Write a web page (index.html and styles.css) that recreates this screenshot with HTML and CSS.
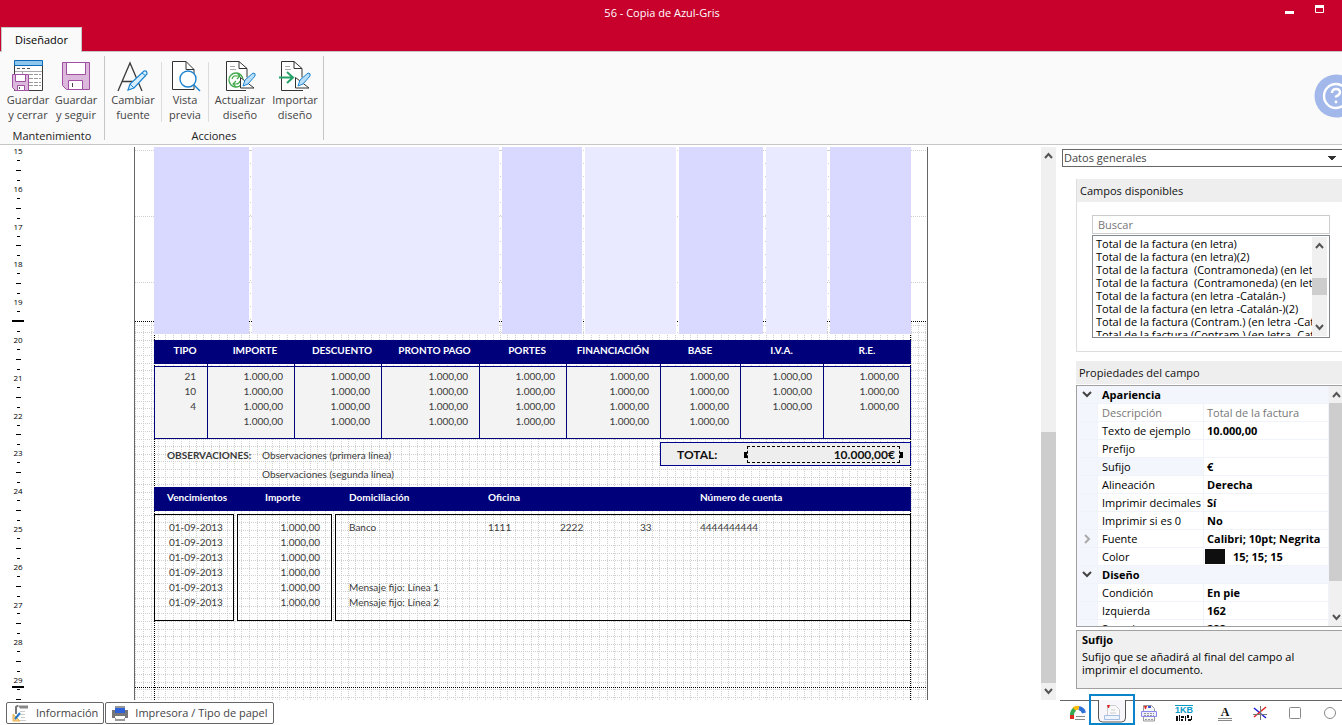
FILE: index.html
```html
<!DOCTYPE html>
<html lang="es">
<head>
<meta charset="utf-8">
<title>56 - Copia de Azul-Gris</title>
<link rel="stylesheet" href="styles.css">
</head>
<body>
<div class="app">
  <header class="titlebar">
    <h1 class="title">56 - Copia de Azul-Gris</h1>
    <div class="window-buttons">
      <button class="win" aria-label="Minimizar"><svg width="10" height="12"><rect y="9" width="9" height="3" fill="#fff"/></svg></button>
      <button class="win" aria-label="Maximizar"><svg width="10" height="12"><path d="M.5 5.500h8v5h-8z" fill="none" stroke="#fff"/><rect y="3" width="9" height="3" fill="#fff"/></svg></button>
    </div>
    <button class="ribbon-tab">Diseñador</button>
  </header>

  <div class="ribbon">
    <section class="group">
      <div class="group-buttons">
        <button class="tool">
          <svg width="32" height="32" fill="none"><path d="M2.500 5V30.500H30.500V1" fill="#fff" stroke="#3b3b3b"/><path d="M2.500.500h28v5h-28z" fill="#8fc6ee" stroke="#0a6ab8"/><path d="M5 8.500h3m2 0h3m2 0h3" stroke="#555"/><path d="M3 11.500h27M10.500 12v5" stroke="#aaa"/><path d="M17 14.500h12M17 18.500h12M17 22.500h12M17 25.500h12" stroke="#999" stroke-dasharray="4 1"/><path d="M.5 14.500h16v16H3.500L.5 27.500z" fill="#dcb8dd" stroke="#a04fa3"/><path d="M3.500 14.500h10v7h-10zM5.500 25.500h7v5h-7z" fill="#fff" stroke="#a04fa3"/><path d="M7.500 27v2" stroke="#555"/></svg>
          <span>Guardar<br>y cerrar</span>
        </button>
        <button class="tool">
          <svg width="32" height="32" fill="none"><path d="M2.500 2.500h27v27H6.500L2.500 25.500z" fill="#dcb8dd" stroke="#a04fa3"/><path d="M6.500 2.500h19v12h-19z" fill="#fff" stroke="#a04fa3"/><path d="M8.500 20.500h14v9h-14z" fill="#fff" stroke="#a04fa3"/><path d="M12.500 23v4" stroke="#444"/></svg>
          <span>Guardar<br>y seguir</span>
        </button>
      </div>
      <h2 class="group-name">Mantenimiento</h2>
    </section>
    <section class="group">
      <div class="group-buttons">
        <button class="tool tool-wide">
          <svg width="32" height="32" fill="none"><path d="M1 31 13 3l12 28M5 21.500h16" stroke="#3b3b3b" stroke-width="1.300"/><path d="m11 30 2-6L27 11q3-1 3 3L17 28z" fill="#d9efff" stroke="#1c84d0" stroke-width="1.200"/><path d="m13 24 4 4M25 13l4 3" stroke="#1c84d0"/></svg>
          <span>Cambiar<br>fuente</span>
        </button>
        <i class="divider"></i>
        <button class="tool tool-narrow">
          <svg width="32" height="32" fill="none"><path d="M3.500 1.500H17l8 8V29.500H3.500z" fill="#fff" stroke="#333"/><path d="M17 1.500v8h8" stroke="#333"/><circle cx="19" cy="19" r="8" fill="#fff" stroke="#1c84d0" stroke-width="1.400"/><path d="m25 25 6 6" stroke="#1c84d0" stroke-width="1.400"/></svg>
          <span>Vista<br>previa</span>
        </button>
        <i class="divider"></i>
        <button class="tool tool-wider">
          <svg width="32" height="32" fill="none"><path d="M22 30.500H2.500v-29H15l8 7v9" fill="#fff" stroke="#333"/><path d="M15 1.500v7h8" stroke="#333"/><path d="M6 6.500h5M6 9.500h6" stroke="#aaa"/><circle cx="12" cy="20" r="7" stroke="#41a94a" stroke-width="1.300"/><path d="M8 19q1-4 5-3h3m-3-3 3 3-3 3M16 21q-1 3-4 3H9m3-3-3 3 3 3" stroke="#41a94a" stroke-width="1.200"/><path d="M16.500 17.500V28H30z" fill="#fff" stroke="#333"/><path d="m19 26 2-6 8-7q3 0 2 3l-7 8z" fill="#b8defa" stroke="#1c84d0"/></svg>
          <span>Actualizar<br>diseño</span>
        </button>
        <button class="tool">
          <svg width="32" height="32" fill="none"><path d="M24 30.500H2.500v-29H15l8 7v9" fill="#fff" stroke="#333"/><path d="M15 1.500v7h8" stroke="#333"/><path d="M6 6.500h5M6 9.500h6" stroke="#aaa"/><path d="M0 17.500h13M8 12l6 5.500L8 23" stroke="#26a269" stroke-width="2"/><path d="M16.500 17.500V28H30z" fill="#fff" stroke="#333"/><path d="m19 26 2-6 8-7q3 0 2 3l-7 8z" fill="#b8defa" stroke="#1c84d0"/></svg>
          <span>Importar<br>diseño</span>
        </button>
      </div>
      <h2 class="group-name">Acciones</h2>
    </section>
    <button class="help" aria-label="Ayuda"><svg width="44" height="44" fill="none"><circle cx="22" cy="22" r="21.500" fill="#a3b8ea"/><circle cx="22" cy="22" r="12" stroke="#fff" stroke-width="2.400"/><path d="M18 19q0-4 4-4t4 3.500q0 2-4 4v1" stroke="#fff" stroke-width="2.400"/><circle cx="22" cy="28" r="1.400" fill="#fff"/></svg></button>
  </div>

  <main class="main">
    <div class="left">
      <div class="workspace">
        <ol class="ruler">
          <li>15<i></i><i></i><i></i></li><li>16<i></i><i></i><i></i></li><li>17<i></i><i></i><i></i></li><li>18<i></i><i></i><i></i></li><li>19<i></i><i></i><i></i></li><li>20<i></i><i></i><i></i></li><li>21<i></i><i></i><i></i></li><li>22<i></i><i></i><i></i></li><li>23<i></i><i></i><i></i></li><li>24<i></i><i></i><i></i></li><li>25<i></i><i></i><i></i></li><li>26<i></i><i></i><i></i></li><li>27<i></i><i></i><i></i></li><li>28<i></i><i></i><i></i></li><li>29<i></i><i></i><i></i></li>
        </ol>
        <b class="ruler-mark mark-top"></b><b class="ruler-mark mark-bottom"></b>

        <div class="canvas">
          <article class="sheet">
            <svg class="grid-lines" width="100%" height="100%" fill="none" shape-rendering="crispEdges">
              <defs>
                <pattern id="fine" x="0" y="178" width="38" height="38" patternUnits="userSpaceOnUse">
                  <path d="M0 .5h38M0 7.500h38M0 15.500h38M0 22.500h38M0 30.500h38" stroke="#d0d0d0" stroke-dasharray="1 1"/>
                  <path d="M.5 0v38M8.500 0v38M16.500 0v38M23.500 0v38M30.500 0v38" stroke="#d0d0d0" stroke-dasharray="1 1"/>
                </pattern>
              </defs>
              <rect y="175" width="100%" height="100%" fill="url(#fine)"/>
              <path d="M0 3.500h793M0 69.500h793M0 135.500h793" stroke="#d0d0d0" stroke-dasharray="1 1"/>
              <path d="M115.500 3v172M365.500 3v172M448.500 3v172M630.500 3v172M693.500 3v172" stroke="#d0d0d0" stroke-dasharray="1 12"/>
              <path d="M0 174.500h793M0 540.500h793" stroke="#000" stroke-dasharray="1 1"/>
              <path d="M19.500 0v600M775.500 0v600" stroke="#000" stroke-dasharray="1 1"/>
            </svg>

            <div class="bands"><i></i><i></i><i></i><i></i><i></i><i></i><i></i></div>

            <table class="taxes">
              <colgroup><col class="w53"><col class="w87"><col class="w87"><col class="w98"><col class="w87"><col class="w94"><col class="w80"><col class="w83"><col></colgroup>
              <thead>
                <tr><th>TIPO</th><th>IMPORTE</th><th>DESCUENTO</th><th>PRONTO PAGO</th><th>PORTES</th><th>FINANCIACIÓN</th><th>BASE</th><th>I.V.A.</th><th>R.E.</th></tr>
              </thead>
              <tbody>
                <tr class="joint"><td></td><td></td><td></td><td></td><td></td><td></td><td></td><td></td><td></td></tr>
                <tr><td>21</td><td>1.000,00</td><td>1.000,00</td><td>1.000,00</td><td>1.000,00</td><td>1.000,00</td><td>1.000,00</td><td>1.000,00</td><td>1.000,00</td></tr>
                <tr><td>10</td><td>1.000,00</td><td>1.000,00</td><td>1.000,00</td><td>1.000,00</td><td>1.000,00</td><td>1.000,00</td><td>1.000,00</td><td>1.000,00</td></tr>
                <tr><td>4</td><td>1.000,00</td><td>1.000,00</td><td>1.000,00</td><td>1.000,00</td><td>1.000,00</td><td>1.000,00</td><td>1.000,00</td><td>1.000,00</td></tr>
                <tr><td></td><td>1.000,00</td><td>1.000,00</td><td>1.000,00</td><td>1.000,00</td><td>1.000,00</td><td>1.000,00</td><td></td><td></td></tr>
              </tbody>
            </table>

            <div class="summary">
              <strong class="notes-name">OBSERVACIONES:</strong>
              <div class="notes"><p>Observaciones (primera línea)</p><p>Observaciones (segunda línea)</p></div>
              <div class="total">
                <strong>TOTAL:</strong>
                <strong class="selected">10.000,00€<i class="handle handle-left"></i><i class="handle handle-right"></i></strong>
              </div>
            </div>

            <div class="due-head"><b>Vencimientos</b><b>Importe</b><b>Domiciliación</b><b>Oficina</b><b>Número de cuenta</b></div>
            <div class="due-body">
              <div class="box dates">01-09-2013<br>01-09-2013<br>01-09-2013<br>01-09-2013<br>01-09-2013<br>01-09-2013</div>
              <div class="box amounts">1.000,00<br>1.000,00<br>1.000,00<br>1.000,00<br>1.000,00<br>1.000,00</div>
              <div class="box bank">
                <div class="account"><span>Banco</span><span>1111</span><span>2222</span><span>33</span><span>4444444444</span></div>
                <p>Mensaje fijo: Línea 1<br>Mensaje fijo: Línea 2</p>
              </div>
            </div>
          </article>
        </div>

        <div class="scroll">
          <svg width="15" height="17" class="arrow"><path d="m4 11 3.500-4 3.500 4"/></svg>
          <i class="space"></i><i class="thumb"></i>
          <svg width="15" height="17" class="arrow"><path d="m4 6 3.500 4L11 6"/></svg>
        </div>
      </div>

      <footer class="footer">
        <button class="foot-button"><svg width="18" height="18" fill="none"><path d="M6 1.500h10v3H8z" fill="#888"/><path d="M6 1.500 4 3v7" stroke="#777" stroke-width="2"/><path d="M8 7.500h5M8 10.500h5M9 13.500h4M8 16.500h6" stroke="#ccc"/><path d="M1 10v7h7z" fill="#f7d08a" stroke="#eab04f"/><path d="m3 15 5-6" stroke="#2479c9" stroke-width="2"/></svg>Información</button>
        <button class="foot-button"><svg width="18" height="18"><path d="M4 2h10v4H4zM4 14h10v3H4z" fill="#999"/><path d="M1 6h16v8h-3v-2H4v2H1z" fill="#777"/><path d="M4 4h10v5H4z" fill="#2d62d8"/><path d="M5 12h8v3H5z" fill="#fff"/></svg>Impresora / Tipo de papel</button>
      </footer>
    </div>

    <aside class="side">
      <select class="source" aria-label="Categoría"><option>Datos generales</option></select>

      <section class="panel">
        <h2 class="panel-name">Campos disponibles</h2>
        <div class="panel-body">
          <input class="search" type="text" placeholder="Buscar" aria-label="Buscar">
          <div class="fields">
            <ul class="field-list">
              <li>Total de la factura (en letra)</li><li>Total de la factura (en letra)(2)</li><li>Total de la factura&nbsp; (Contramoneda) (en letra)</li><li>Total de la factura&nbsp; (Contramoneda) (en letra)(2)</li><li>Total de la factura (en letra -Catalán-)</li><li>Total de la factura (en letra -Catalán-)(2)</li><li>Total de la factura (Contram.) (en letra -Catalán-)</li><li>Total de la factura (Contram.) (en letra -Catalán-)(2)</li>
            </ul>
            <div class="list-scroll">
              <svg width="15" height="17" class="arrow"><path d="m4 11 3.500-4 3.500 4"/></svg>
              <i class="list-space"></i><i class="list-thumb"></i><i class="list-rest"></i>
              <svg width="15" height="17" class="arrow"><path d="m4 6 3.500 4L11 6"/></svg>
            </div>
          </div>
        </div>
      </section>

      <section class="properties">
        <h2 class="panel-name">Propiedades del campo</h2>
        <div class="property-box">
          <div class="property-view">
          <table class="property-table">
            <colgroup><col class="w21"><col class="w106"><col></colgroup>
            <tbody>
              <tr class="category"><td><svg width="12" height="10" class="chevron"><path d="m2 2 4 4 4-4"/></svg></td><th colspan="2">Apariencia</th></tr>
              <tr class="muted"><td></td><th>Descripción</th><td>Total de la factura</td></tr>
              <tr><td></td><th>Texto de ejemplo</th><td>10.000,00</td></tr>
              <tr><td></td><th>Prefijo</th><td></td></tr>
              <tr class="current"><td></td><th>Sufijo</th><td>€</td></tr>
              <tr><td></td><th>Alineación</th><td>Derecha</td></tr>
              <tr><td></td><th>Imprimir decimales</th><td>Sí</td></tr>
              <tr><td></td><th>Imprimir si es 0</th><td>No</td></tr>
              <tr><td><svg width="12" height="10" class="chevron closed"><path d="m4 1 4 4-4 4"/></svg></td><th>Fuente</th><td>Calibri; 10pt; Negrita</td></tr>
              <tr><td></td><th>Color</th><td><span class="color"><i class="swatch"></i>15; 15; 15</span></td></tr>
              <tr class="category"><td><svg width="12" height="10" class="chevron"><path d="m2 2 4 4 4-4"/></svg></td><th colspan="2">Diseño</th></tr>
              <tr><td></td><th>Condición</th><td>En pie</td></tr>
              <tr><td></td><th>Izquierda</th><td>162</td></tr>
              <tr><td></td><th>Superior</th><td>282</td></tr>
            </tbody>
          </table>
          </div>
          <div class="property-scroll">
            <svg width="15" height="17" class="arrow"><path d="m4 11 3.500-4 3.500 4"/></svg>
            <i class="property-thumb"></i><i class="property-rest"></i>
            <svg width="15" height="17" class="arrow"><path d="m4 6 3.500 4L11 6"/></svg>
          </div>
        </div>
        <div class="hint"><strong>Sufijo</strong><p>Sufijo que se añadirá al final del campo al imprimir el documento.</p></div>
      </section>

      <nav class="tabs">
        <button class="tab" aria-label="Color"><svg width="18" height="18" fill="none"><path d="M3 15v-4" stroke="#e02b20" stroke-width="4"/><path d="M3 11q0-4 3-6" stroke="#34a853" stroke-width="4"/><path d="M5 5q2-2 5-1" stroke="#fbbc05" stroke-width="4"/><path d="M10 4q4 1 5 5" stroke="#2f6fd6" stroke-width="4"/><path d="M7 12.500h9M6 15.500h10" stroke="#888"/></svg></button>
        <button class="tab active" aria-label="Campos"><svg width="30" height="24" fill="none"><path d="M1.500 0v18q0 4 4 4h19q4 0 4-4V0" fill="#f7f7fb" stroke="#555"/><path d="M10.500 15V5.500h8l4 4V19" stroke="#ccc" fill="#fafafa"/><path d="M7.500 15.500h15v4h-15z" stroke="#a5bfe4" fill="#eef3fc"/><path d="M10 5h3l-1 3h-1z" fill="#e02020"/><path d="M13 13h6M14 10h4" stroke="#ccc"/></svg></button>
        <button class="tab" aria-label="Documento"><svg width="18" height="18" fill="none"><path d="M3.500 17V1.500h8l3 3V17z" stroke="#999" fill="#f6f6f6"/><path d="M4 2h3l-1 3H5z" fill="#e02020"/><path d="M8 2h3v2H8z" fill="#3c4fd0"/><path d="M1.500 7.500h15v5h-15z" stroke="#8c87ea" fill="#eeecff"/><path d="M4 9.500h10M4 11.500h10M5 15.500h8" stroke="#999" stroke-dasharray="2 1"/></svg></button>
        <button class="tab barcode" aria-label="Código de barras"><span>1KB</span><svg width="18" height="7"><path d="M1 1h2v5H1zM4 0h1v6H4zM6 1h3v2H6zM6 4h2v2H6zM10 1h1v5h-1zM12 0h2v3h-2zM13 4h3v2h-3zM16 1h1v4h-1z" fill="#111"/></svg></button>
        <button class="tab letter" aria-label="Texto"><span>A</span></button>
        <button class="tab" aria-label="Líneas"><svg width="18" height="18" fill="none"><path d="M3 4 15 14" stroke="#2020d8" stroke-width="1.500"/><path d="M15 3 3 13" stroke="#e02020" stroke-width="1.500"/><path d="M9.500 2v14M2 10.500h14" stroke="#777"/></svg></button>
        <button class="tab" aria-label="Rectángulo"><svg width="18" height="18" fill="none"><rect x="3.500" y="3.500" width="11" height="11" rx="1" stroke="#888"/></svg></button>
        <button class="tab" aria-label="Elipse"><svg width="18" height="18" fill="none"><circle cx="9" cy="9" r="5.500" stroke="#888"/></svg></button>
      </nav>
    </aside>
  </main>
</div>
</body>
</html>
```
FILE: styles.css
```css
* { box-sizing: border-box; }
body, h1, h2, p, ol, ul { margin: 0; padding: 0; }
body { font: 11px/14px "Open Sans", "Noto Sans", sans-serif; color: #111; }
ol, ul { list-style: none; }
button, input, select { font: inherit; color: inherit; border: 0; padding: 0; background: none; border-radius: 0; }
svg { display: block; flex: none; }

.app { height: 100vh; display: flex; flex-direction: column; overflow: hidden; background: #fff; }

/* Title bar */
.titlebar { flex: none; height: 52px; background: #c8002c; border-bottom: 1px solid #c6c6c6; display: grid; grid-template: 27px 25px / 82px 1fr 100px; }
.title { grid-column: 1 / 3; grid-row: 1; padding-left: 82px; text-align: center; color: #fff; font-size: 11px; font-weight: 400; line-height: 26px; }
.window-buttons { grid-column: 3; grid-row: 1; display: flex; gap: 20px; padding: 2px 0 0 43px; align-items: flex-start; }
.ribbon-tab { grid-column: 1; grid-row: 2; margin-left: 1px; background: #fafafa; border: 1px solid #c6c6c6; border-bottom: 0; color: #000; }

/* Ribbon */
.ribbon { flex: none; height: 93px; display: flex; background: #fafafa; border-bottom: 1px solid #c6c6c6; position: relative; }
.group { margin: 4px 0; padding: 0 4px; border-right: 1px solid #c6c6c6; display: flex; flex-direction: column; }
.group-buttons { display: flex; flex: 1; }
.group + .group .group-buttons { margin-left: -4px; }
.tool { flex: none; width: 48px; padding-top: 4px; display: flex; flex-direction: column; align-items: center; line-height: 15px; color: #444; white-space: nowrap; }
.tool-narrow { width: 46px; }
.tool-wide { width: 56px; }
.tool-wider { width: 62px; }
.divider { width: 1px; margin: 6px 0 10px; background: #dcdcdc; }
.group-name { text-align: center; font-size: 11px; font-weight: 400; line-height: 8px; color: #222; }
.help { position: absolute; right: -16px; top: 22px; }

/* Work area */
.main { flex: 1; min-height: 0; display: grid; grid-template-columns: 1fr 282px; }
.left { display: flex; flex-direction: column; min-width: 0; min-height: 0; }
.workspace { flex: 1; min-height: 0; padding-top: 2px; display: flex; overflow: hidden; position: relative; }
.ruler { width: 36px; height: 567px; display: flex; flex-direction: column; }
.ruler li { flex: 1; display: flex; flex-direction: column; align-items: center; justify-content: space-between; font: 8px/8px "Open Sans", sans-serif; color: #000; }
.ruler i { width: 3px; height: 1px; background: #000; margin: 4px 0; }
.ruler i:nth-child(2) { width: 5px; }
.ruler-mark { position: absolute; left: 12px; width: 12px; height: 2px; background: #000; }
.mark-top { top: 175px; }
.mark-bottom { top: 541px; }

.canvas { flex: 1; min-width: 0; overflow: hidden; padding-left: 98px; }
.sheet { width: 794px; height: 100%; padding: 0 16px 0 19px; border: solid #666; border-width: 0 1px; position: relative; overflow: hidden; font: 10px/15px Lato, sans-serif; color: #3a3a3a; }
.grid-lines { position: absolute; left: 0; top: 0; }
.bands, .taxes, .summary, .due-head, .due-body { position: relative; }
.bands { height: 187px; display: grid; gap: 3px; grid-template-columns: 95fr 247fr 80fr 91fr 84fr 61fr 81fr; }
.bands i { background: #d9d9ff; }
.bands i:nth-child(even) { background: #e9e9ff; }

.taxes { width: 100%; margin-top: 6px; table-layout: fixed; border-collapse: separate; border-spacing: 0; }
.taxes th { height: 24px; padding: 0 0 3px; background: #00007b; color: #fff; font-weight: 700; line-height: 15px; white-space: nowrap; }
.taxes th:nth-child(-n+5) { padding-left: 9px; }
.taxes td { height: 15px; padding: 0 11px 0 0; text-align: right; background: #f3f3f3; border-left: 1px solid #00007b; }
.taxes td:last-child { border-right: 1px solid #00007b; }
.taxes .joint td { height: 2px; background: none; }
.taxes .joint td:first-child { border-left-color: transparent; }
.taxes .joint td:last-child { border-right-color: transparent; }
.taxes .joint + tr td { height: 18px; padding-top: 2px; border-top: 1px solid #00007b; }
.taxes tr:last-child td { height: 25px; padding-bottom: 9px; border-bottom: 1px solid #00007b; }
.w53 { width: 53px; } .w87 { width: 87px; } .w98 { width: 98px; } .w94 { width: 94px; } .w80 { width: 80px; } .w83 { width: 83px; }

.summary { height: 48px; padding: 3px 0 0 13px; display: flex; }
.notes-name { width: 95px; padding-top: 6px; }
.notes { flex: 1; padding-top: 6px; display: flex; flex-direction: column; gap: 4px; }
.total { width: 251px; height: 24px; padding: 0 10px 0 16px; display: flex; align-items: center; background: #eee; border: 1px solid #000090; color: #111; font-size: 12px; }
.selected { flex: 1; margin-left: 30px; padding-right: 4px; border: 1px dashed #000; text-align: right; line-height: 15px; position: relative; }
.handle { position: absolute; top: 5px; width: 3px; height: 6px; background: #000; }
.handle-left { left: -4px; }
.handle-right { right: -4px; }

.due-head, .account { display: grid; }
.due-head { height: 24px; padding-left: 13px; background: #00007b; color: #fff; line-height: 21px; grid-template-columns: 98px 84px 139px 212px 1fr; }
.due-body { margin-top: 3px; display: grid; grid-template-columns: 80px 95px 1fr; gap: 3px; }
.box { border: 1px solid #000; padding: 5px 11px 10px; white-space: nowrap; }
.dates { padding-left: 14px; }
.amounts { text-align: right; }
.bank { padding-left: 13px; display: flex; flex-direction: column; justify-content: space-between; }
.account { grid-template-columns: 139px 72px 80px 60px 1fr; }

/* Scroll bars */
.scroll { width: 15px; margin-right: 4px; background: #f0f0f0; display: flex; flex-direction: column; }
.arrow { fill: none; stroke: #555; stroke-width: 2; }
.space { flex: 267; }
.thumb { flex: 250; background: #cdcdcd; }
.list-scroll, .property-scroll { width: 15px; background: #f0f0f0; display: flex; flex-direction: column; }
.list-space { flex: 24; }
.list-thumb { flex: 17; background: #cdcdcd; }
.list-rest { flex: 24; }
.property-thumb { flex: 180; background: #cdcdcd; }
.property-rest { flex: 28; }

/* Footer */
.footer { flex: none; height: 25px; padding: 2px 6px 1px; display: flex; gap: 1px; }
.foot-button { padding: 0 5px; display: flex; align-items: center; gap: 6px; border: 1px solid #666; border-radius: 2px; color: #444; }

/* Side panel */
.side { min-height: 0; display: flex; flex-direction: column; overflow: hidden; }
.source { flex: none; height: 18px; margin: 4px -6px 12px 2px; padding-left: 1px; appearance: none; border: 1px solid #666; color: #444; background: #fff conic-gradient(from 315deg at 50% 100%, #333 90deg, transparent 0) no-repeat right 11px center / 8px 4px; }
.panel { margin-left: 16px; border-left: 1px solid #ddd; border-bottom: 1px solid #ddd; }
.panel-name { height: 23px; padding-left: 3px; background: #eee; font-size: 11px; line-height: 23px; font-weight: 400; }
.panel-body { padding: 13px 12px 13px 15px; }
.search { display: block; width: 100%; height: 19px; padding: 0 5px; border: 1px solid #ccc; }
.search::placeholder { color: #777; opacity: 1; }
.fields { height: 103px; margin-top: 1px; padding: 1px; border: 1px solid #828790; display: flex; }
.field-list { flex: 1; overflow: hidden; padding-left: 2px; white-space: nowrap; line-height: 13px; color: #000; }
.list-scroll { margin-right: 1px; }
.properties { flex: 1; min-height: 0; margin: 9px 0 11px 16px; display: flex; flex-direction: column; }
.property-box { flex: 1; min-height: 0; margin-top: 1px; border: 1px solid #a0a0a0; border-right: 0; display: flex; }
.property-view { flex: 1; overflow: hidden; }
.property-scroll { margin-right: -2px; }
.property-table { width: 100%; table-layout: fixed; border-collapse: separate; border-spacing: 0; white-space: nowrap; color: #000; }
.property-table td, .property-table th { height: 18px; padding: 0 0 0 4px; text-align: left; line-height: 17px; border: 1px solid #f0f3f9; border-width: 0 1px 1px 0; }
.property-table tr > :last-child { padding-left: 3px; }
.property-table th { font-weight: 400; }
.property-table td { font-weight: 700; }
.property-table td:first-child, .property-table .category th, .current th { background: #f3f6fc; }
.property-table .category th { font-weight: 700; padding-left: 4px; }
.property-table .muted th, .property-table .muted td { color: #777; font-weight: 400; }
.w21 { width: 21px; } .w106 { width: 106px; }
.chevron { fill: none; stroke: #444; stroke-width: 2; }
.closed { stroke: #aaa; }
.color { display: flex; align-items: center; gap: 8px; margin-left: -2px; }
.swatch { width: 20px; height: 15px; background: #0f0f0f; }
.hint { height: 59px; margin: 3px -2px 0 0; padding: 2px 5px; border: 1px solid #a0a0a0; background: #f0f0f0; line-height: 13px; color: #000; }
.hint p { margin-top: 4px; padding-right: 36px; }

/* Bottom tabs */
.tabs { flex: none; height: 25px; display: flex; gap: 17px; border-top: 1px solid #666; padding-left: 9px; position: relative; }
.tab { flex: none; width: 18px; height: 24px; display: grid; place-items: center; align-content: center; }
.tab.active { width: 46px; height: 31px; margin: -7px -12px 0 -15px; padding-top: 4px; align-content: start; border: 2px solid #0a84c8; }
.barcode { font: 700 9px/9px "Liberation Sans", sans-serif; color: #0a9ac8; }
.barcode span { border-top: 1px solid #0a9ac8; }
.letter { margin-left: 6px; }
.letter span { width: 14px; border-bottom: 3px double #888; font: 700 12px/12px "Liberation Serif", serif; text-align: center; }
```
